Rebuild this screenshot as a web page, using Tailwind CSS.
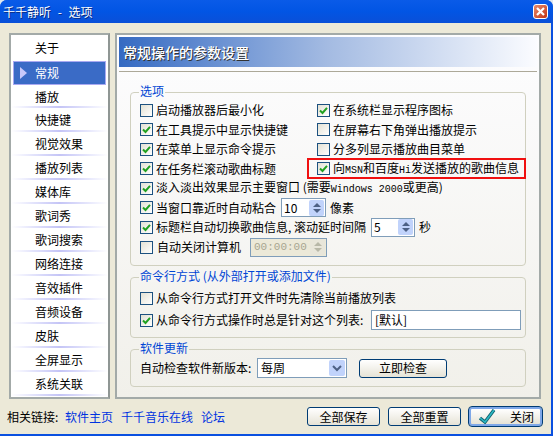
<!DOCTYPE html>
<html lang="zh-CN">
<head>
  <meta charset="UTF-8" />
  <title>千千静听 - 选项</title>
  <script src="https://cdn.jsdelivr.net/npm/@tailwindcss/browser@4"></script>
</head>
<body class="bg-[#dfe8f0]">
<div class="w-[553px] h-[436px] flex flex-col overflow-hidden rounded-t-[7px] bg-[#0a50e0] font-['Noto_Sans_CJK_SC',sans-serif] text-[12px] text-black leading-none">

  <!-- title bar -->
  <div class="h-[23px] shrink-0 flex items-center justify-between pl-[3px] pr-[5px] bg-linear-to-b from-[#0a5be8] via-[#0255e4] to-[#0a4fd8]">
    <span class="text-white text-[12px] whitespace-pre [word-spacing:4px] [text-shadow:1px_1px_0_#0a2a80]">千千静听 - 选项</span>
    <div class="w-[15px] h-[15px] rounded-[3px] border border-white bg-linear-to-br from-[#e88a6a] to-[#c0300c] flex items-center justify-center">
      <svg width="9" height="9" viewBox="0 0 9 9"><path d="M1 1L8 8M8 1L1 8" stroke="#fff" stroke-width="2.2"/></svg>
    </div>
  </div>

  <!-- dialog body -->
  <div class="flex-1 mr-[2px] mb-[2px] bg-[#ece9d8] flex flex-col">
    <div class="flex gap-[5px] pl-[9px] pr-[10px] pt-[10px]">

      <!-- sidebar -->
      <div class="w-[101px] h-[366px] border-2 border-[#a3aaa8] border-r-[#8f9694] bg-white pt-px flex flex-col">
        <div class="h-[24px] shrink-0 flex items-center pl-[24px]">关于</div>
        <div class="h-[24px] shrink-0 mt-px mx-[2px] flex items-center pl-[6px] pb-px gap-[7px] bg-[#3a6bc6] border border-[#a9a9f2] text-white">
          <svg width="8" height="12" viewBox="0 0 8 12"><path d="M0 0L7 6L0 12Z" fill="#c8c8fa"/></svg>
          <span>常规</span>
        </div>
        <div class="h-[23px] shrink-0 flex items-center pl-[24px] bg-linear-to-r from-white via-[#c4c4f6] to-white bg-no-repeat bg-bottom bg-[length:100%_2px]">播放</div>
        <div class="h-[24px] shrink-0 flex items-center pl-[24px] bg-linear-to-r from-white via-[#c4c4f6] to-white bg-no-repeat bg-bottom bg-[length:100%_2px]">快捷键</div>
        <div class="h-[24px] shrink-0 flex items-center pl-[24px] bg-linear-to-r from-white via-[#c4c4f6] to-white bg-no-repeat bg-bottom bg-[length:100%_2px]">视觉效果</div>
        <div class="h-[24px] shrink-0 flex items-center pl-[24px] bg-linear-to-r from-white via-[#c4c4f6] to-white bg-no-repeat bg-bottom bg-[length:100%_2px]">播放列表</div>
        <div class="h-[24px] shrink-0 flex items-center pl-[24px] bg-linear-to-r from-white via-[#c4c4f6] to-white bg-no-repeat bg-bottom bg-[length:100%_2px]">媒体库</div>
        <div class="h-[24px] shrink-0 flex items-center pl-[24px] bg-linear-to-r from-white via-[#c4c4f6] to-white bg-no-repeat bg-bottom bg-[length:100%_2px]">歌词秀</div>
        <div class="h-[24px] shrink-0 flex items-center pl-[24px] bg-linear-to-r from-white via-[#c4c4f6] to-white bg-no-repeat bg-bottom bg-[length:100%_2px]">歌词搜索</div>
        <div class="h-[24px] shrink-0 flex items-center pl-[24px] bg-linear-to-r from-white via-[#c4c4f6] to-white bg-no-repeat bg-bottom bg-[length:100%_2px]">网络连接</div>
        <div class="h-[24px] shrink-0 flex items-center pl-[24px] bg-linear-to-r from-white via-[#c4c4f6] to-white bg-no-repeat bg-bottom bg-[length:100%_2px]">音效插件</div>
        <div class="h-[24px] shrink-0 flex items-center pl-[24px] bg-linear-to-r from-white via-[#c4c4f6] to-white bg-no-repeat bg-bottom bg-[length:100%_2px]">音频设备</div>
        <div class="h-[24px] shrink-0 flex items-center pl-[24px] bg-linear-to-r from-white via-[#c4c4f6] to-white bg-no-repeat bg-bottom bg-[length:100%_2px]">皮肤</div>
        <div class="h-[24px] shrink-0 flex items-center pl-[24px] bg-linear-to-r from-white via-[#c4c4f6] to-white bg-no-repeat bg-bottom bg-[length:100%_2px]">全屏显示</div>
        <div class="h-[24px] shrink-0 flex items-center pl-[24px] bg-linear-to-r from-white via-[#c4c4f6] to-white bg-no-repeat bg-bottom bg-[length:100%_2px]">系统关联</div>
      </div>

      <!-- main panel -->
      <div class="w-[426px] h-[366px] border-2 border-[#a3aaa8] bg-linear-to-b from-[#fdfdff] to-[#f1f0ea] pt-[2px] px-[2px]">
        <div class="h-[30px] flex items-center pl-[4px] bg-linear-to-r from-[#356ac2] via-[#a4bbe2] to-[#fbfcff] text-white text-[14px] font-medium [text-shadow:1px_1px_0_#333]">常规操作的参数设置</div>
        <div class="mt-[4px] h-[1px] bg-[#aca899]"></div>

        <!-- options -->
        <div class="relative mt-[20px] mx-[11px] h-[174px] border border-[#d0d0bf] rounded-[4px] pl-[9px] pt-[7px]">
          <span class="absolute left-[8px] -top-[8px] px-[1px] bg-[#fbfbfb] text-[#0046d5]">选项</span>

          <div class="grid grid-cols-[177px_1fr]">
            <div class="h-[20px] flex items-center gap-[3px]">
              <div class="w-[13px] h-[13px] border border-[#1c5180] bg-linear-to-br from-[#e3e1d4] to-white"></div>
              <span>启动播放器后最小化</span>
            </div>
            <div class="h-[20px] flex items-center gap-[3px]">
              <div class="w-[13px] h-[13px] border border-[#1c5180] bg-linear-to-br from-[#e3e1d4] to-white flex items-center justify-center"><svg width="9" height="9" viewBox="0 0 9 9"><path d="M1 4.5L3.5 7L8 1.8" fill="none" stroke="#21a121" stroke-width="2"/></svg></div>
              <span>在系统栏显示程序图标</span>
            </div>
            <div class="h-[19px] flex items-center gap-[3px]">
              <div class="w-[13px] h-[13px] border border-[#1c5180] bg-linear-to-br from-[#e3e1d4] to-white flex items-center justify-center"><svg width="9" height="9" viewBox="0 0 9 9"><path d="M1 4.5L3.5 7L8 1.8" fill="none" stroke="#21a121" stroke-width="2"/></svg></div>
              <span>在工具提示中显示快捷键</span>
            </div>
            <div class="h-[19px] flex items-center gap-[3px]">
              <div class="w-[13px] h-[13px] border border-[#1c5180] bg-linear-to-br from-[#e3e1d4] to-white"></div>
              <span>在屏幕右下角弹出播放提示</span>
            </div>
            <div class="h-[20px] flex items-center gap-[3px]">
              <div class="w-[13px] h-[13px] border border-[#1c5180] bg-linear-to-br from-[#e3e1d4] to-white flex items-center justify-center"><svg width="9" height="9" viewBox="0 0 9 9"><path d="M1 4.5L3.5 7L8 1.8" fill="none" stroke="#21a121" stroke-width="2"/></svg></div>
              <span>在菜单上显示命令提示</span>
            </div>
            <div class="h-[20px] flex items-center gap-[3px]">
              <div class="w-[13px] h-[13px] border border-[#1c5180] bg-linear-to-br from-[#e3e1d4] to-white"></div>
              <span>分多列显示播放曲目菜单</span>
            </div>
            <div class="h-[19px] flex items-center gap-[3px]">
              <div class="w-[13px] h-[13px] border border-[#1c5180] bg-linear-to-br from-[#e3e1d4] to-white flex items-center justify-center"><svg width="9" height="9" viewBox="0 0 9 9"><path d="M1 4.5L3.5 7L8 1.8" fill="none" stroke="#21a121" stroke-width="2"/></svg></div>
              <span>在任务栏滚动歌曲标题</span>
            </div>
            <div class="relative h-[19px] flex items-center gap-[3px]">
              <!-- red annotation box -->
              <div class="absolute -left-[10px] -top-[1px] w-[219px] h-[21px] border-2 border-[#f01010]"></div>
              <div class="w-[13px] h-[13px] border border-[#1c5180] bg-linear-to-br from-[#e3e1d4] to-white flex items-center justify-center"><svg width="9" height="9" viewBox="0 0 9 9"><path d="M1 4.5L3.5 7L8 1.8" fill="none" stroke="#21a121" stroke-width="2"/></svg></div>
              <span>向<span class="font-['Liberation_Mono',monospace] text-[10px]">MSN</span>和百度<span class="font-['Liberation_Mono',monospace] text-[10px]">Hi</span>发送播放的歌曲信息</span>
            </div>
          </div>

          <div class="h-[20px] flex items-center gap-[3px]">
            <div class="w-[13px] h-[13px] border border-[#1c5180] bg-linear-to-br from-[#e3e1d4] to-white flex items-center justify-center"><svg width="9" height="9" viewBox="0 0 9 9"><path d="M1 4.5L3.5 7L8 1.8" fill="none" stroke="#21a121" stroke-width="2"/></svg></div>
            <span>淡入淡出效果显示主要窗口 (需要<span class="font-['Liberation_Mono',monospace] text-[10px]">Windows 2000</span>或更高)</span>
          </div>
          <div class="h-[19px] flex items-center gap-[3px]">
            <div class="w-[13px] h-[13px] border border-[#1c5180] bg-linear-to-br from-[#e3e1d4] to-white flex items-center justify-center"><svg width="9" height="9" viewBox="0 0 9 9"><path d="M1 4.5L3.5 7L8 1.8" fill="none" stroke="#21a121" stroke-width="2"/></svg></div>
            <span class="w-[122px]">当窗口靠近时自动粘合</span>
            <div class="w-[45px] h-[19px] border border-[#7f9db9] bg-white flex items-center justify-between pl-[2px] pr-px">
              <span>10</span>
              <div class="w-[15px] h-[16px] rounded-[2px] bg-[#c1d3fb] flex flex-col items-center justify-center gap-[2px]">
                <svg width="8" height="4" viewBox="0 0 8 4"><path d="M4 0L8 4H0Z" fill="#4d6185"/></svg>
                <svg width="8" height="4" viewBox="0 0 8 4"><path d="M0 0H8L4 4Z" fill="#4d6185"/></svg>
              </div>
            </div>
            <span class="ml-[1px]">像素</span>
          </div>
          <div class="h-[20px] flex items-center gap-[3px]">
            <div class="w-[13px] h-[13px] border border-[#1c5180] bg-linear-to-br from-[#e3e1d4] to-white flex items-center justify-center"><svg width="9" height="9" viewBox="0 0 9 9"><path d="M1 4.5L3.5 7L8 1.8" fill="none" stroke="#21a121" stroke-width="2"/></svg></div>
            <span class="w-[212px] whitespace-nowrap">标题栏自动切换歌曲信息, 滚动延时间隔</span>
            <div class="w-[44px] h-[19px] border border-[#7f9db9] bg-white flex items-center justify-between pl-[2px] pr-px">
              <span>5</span>
              <div class="w-[15px] h-[16px] rounded-[2px] bg-[#c1d3fb] flex flex-col items-center justify-center gap-[2px]">
                <svg width="8" height="4" viewBox="0 0 8 4"><path d="M4 0L8 4H0Z" fill="#4d6185"/></svg>
                <svg width="8" height="4" viewBox="0 0 8 4"><path d="M0 0H8L4 4Z" fill="#4d6185"/></svg>
              </div>
            </div>
            <span class="ml-[1px]">秒</span>
          </div>
          <div class="h-[20px] flex items-center gap-[3px]">
            <div class="w-[13px] h-[13px] border border-[#1c5180] bg-linear-to-br from-[#e3e1d4] to-white"></div>
            <span class="w-[91px] pl-[1px]">自动关闭计算机</span>
            <div class="w-[77px] h-[19px] border border-[#7f9db9] bg-[#ece9d8] flex items-center justify-between pl-[3px] pr-px text-[#a8a690]">
              <span class="font-['Liberation_Mono',monospace] text-[11px]">00:00:00</span>
              <div class="w-[15px] h-[16px] rounded-[2px] bg-[#e8e6da] flex flex-col items-center justify-center gap-[2px]">
                <svg width="8" height="4" viewBox="0 0 8 4"><path d="M4 0L8 4H0Z" fill="#b8b8a8"/></svg>
                <svg width="8" height="4" viewBox="0 0 8 4"><path d="M0 0H8L4 4Z" fill="#b8b8a8"/></svg>
              </div>
            </div>
          </div>
        </div>

        <!-- command line -->
        <div class="relative mt-[11px] mx-[11px] h-[61px] border border-[#d0d0bf] rounded-[4px] pl-[9px] pt-[10px]">
          <span class="absolute left-[8px] -top-[8px] px-[1px] bg-[#f6f5f2] text-[#0046d5]">命令行方式 (从外部打开或添加文件)</span>
          <div class="h-[20px] flex items-center gap-[3px]">
            <div class="w-[13px] h-[13px] border border-[#1c5180] bg-linear-to-br from-[#e3e1d4] to-white"></div>
            <span>从命令行方式打开文件时先清除当前播放列表</span>
          </div>
          <div class="h-[22px] mt-[1px] flex items-center gap-[3px]">
            <div class="w-[13px] h-[13px] border border-[#1c5180] bg-linear-to-br from-[#e3e1d4] to-white flex items-center justify-center"><svg width="9" height="9" viewBox="0 0 9 9"><path d="M1 4.5L3.5 7L8 1.8" fill="none" stroke="#21a121" stroke-width="2"/></svg></div>
            <span class="w-[212px] whitespace-nowrap">从命令行方式操作时总是针对这个列表:</span>
            <div class="w-[150px] h-[20px] border border-[#7f9db9] bg-white flex items-center pl-[3px]">[默认]</div>
          </div>
        </div>

        <!-- update -->
        <div class="relative mt-[11px] mx-[11px] h-[38px] border border-[#d0d0bf] rounded-[4px] pl-[9px] pt-[8px]">
          <span class="absolute left-[8px] -top-[8px] px-[1px] bg-[#f3f2ed] text-[#0046d5]">软件更新</span>
          <div class="h-[20px] flex items-center">
            <span class="w-[117px] whitespace-nowrap">自动检查软件新版本:</span>
            <div class="w-[90px] h-[20px] border border-[#7f9db9] bg-white flex items-center justify-between pl-[3px] pr-px">
              <span>每周</span>
              <div class="w-[16px] h-[16px] rounded-[2px] bg-[#c1d3fb] flex items-center justify-center">
                <svg width="10" height="7" viewBox="0 0 10 7"><path d="M1 1L5 5L9 1" fill="none" stroke="#4d6185" stroke-width="2"/></svg>
              </div>
            </div>
            <div class="ml-[12px] w-[88px] h-[19px] rounded-[3px] border border-[#003c74] bg-linear-to-b from-white to-[#e6e3d6] flex items-center justify-center">立即检查</div>
          </div>
        </div>
      </div>
    </div>

    <!-- footer -->
    <div class="flex-1 flex items-center pl-[7px] pr-[9px]">
      <span class="w-[58px] whitespace-nowrap">相关链接:</span>
      <span class="text-[#0033e0] w-[56px] whitespace-nowrap">软件主页</span>
      <span class="text-[#0033e0] w-[80px] whitespace-nowrap">千千音乐在线</span>
      <span class="text-[#0033e0] whitespace-nowrap">论坛</span>
      <div class="ml-auto flex gap-[8px]">
        <div class="w-[73px] h-[19px] rounded-[3px] border border-[#003c74] bg-linear-to-b from-white to-[#e6e3d6] flex items-center justify-center">全部保存</div>
        <div class="w-[73px] h-[19px] rounded-[3px] border border-[#003c74] bg-linear-to-b from-white to-[#e6e3d6] flex items-center justify-center">全部重置</div>
        <div class="w-[73px] h-[19px] rounded-[3px] border-2 border-[#7fa8e8] outline outline-1 outline-[#003c74] bg-linear-to-b from-white to-[#e6e3d6] flex items-center gap-[14px] pl-[8px]">
          <svg width="17" height="15" viewBox="0 0 17 15"><path d="M1 9L6 13L15 1" fill="none" stroke="#12606e" stroke-width="3.4"/><path d="M1 9L6 13L15 1" fill="none" stroke="#2bb8c4" stroke-width="1.6"/></svg>
          <span>关闭</span>
        </div>
      </div>
    </div>
  </div>
</div>
</body>
</html>
